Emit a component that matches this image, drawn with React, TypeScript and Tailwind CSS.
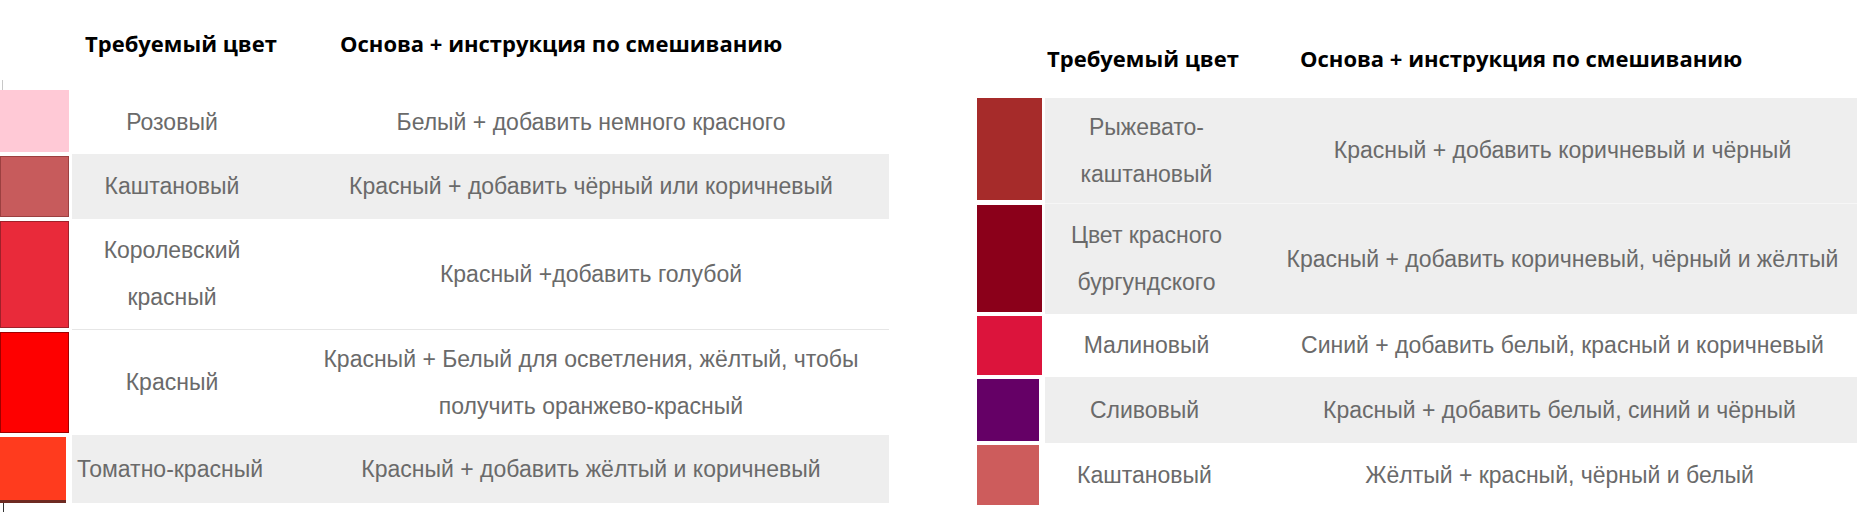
import React from "react";

type Row = {
  h: string;
  sw: string;
  swBox: string;
  bg: string;
  name: string[];
  mix: string[];
  c1: string;
  c2: string;
};

const leftRows: Row[] = [
  { h: "h-[64px]", sw: "bg-[#ffc9d6]", swBox: "pt-0 pb-[2px]", bg: "bg-white", name: ["Розовый"], mix: ["Белый + добавить немного красного"], c1: "pr-[21px]", c2: "" },
  { h: "h-[65px]", sw: "bg-[#c75b5c] border border-[#9c4040]", swBox: "py-[2px]", bg: "bg-[#eeeeee]", name: ["Каштановый"], mix: ["Красный + добавить чёрный или коричневый"], c1: "pr-[21px]", c2: "" },
  { h: "h-[111px]", sw: "bg-[#e92a3a] border border-[#a0202a]", swBox: "py-[2px]", bg: "bg-white border-b border-[#e6e6e6]", name: ["Королевский", "красный"], mix: ["Красный +добавить голубой"], c1: "pr-[21px]", c2: "" },
  { h: "h-[105px]", sw: "bg-[#fe0000] border border-[#a00000]", swBox: "py-[2px]", bg: "bg-white", name: ["Красный"], mix: ["Красный + Белый для осветления, жёлтый, чтобы", "получить оранжево-красный"], c1: "pr-[21px]", c2: "" },
  { h: "h-[68px]", sw: "bg-[#ff3b1e] border-b-[3px] border-[#6e2a22]", swBox: "pt-[2px] pr-[3px]", bg: "bg-[#eeeeee]", name: ["Томатно-красный"], mix: ["Красный + добавить жёлтый и коричневый"], c1: "pr-[25px]", c2: "" },
];

const rightRows: Row[] = [
  { h: "h-[105px]", sw: "bg-[#a62b2a]", swBox: "pt-0 pb-[3px]", bg: "bg-[#eeeeee]", name: ["Рыжевато-", "каштановый"], mix: ["Красный + добавить коричневый и чёрный"], c1: "", c2: "pl-[20px]" },
  { h: "h-[111px]", sw: "bg-[#8b001a]", swBox: "py-[2px]", bg: "bg-[#eeeeee] border-t border-[#f6f6f6]", name: ["Цвет красного", "бургундского"], mix: ["Красный + добавить коричневый, чёрный и жёлтый"], c1: "", c2: "pl-[20px]" },
  { h: "h-[63px]", sw: "bg-[#dc143c]", swBox: "py-[2px]", bg: "bg-white", name: ["Малиновый"], mix: ["Синий + добавить белый, красный и коричневый"], c1: "", c2: "pl-[20px]" },
  { h: "h-[66px]", sw: "bg-[#650066]", swBox: "py-[2px] pr-[3px]", bg: "bg-[#eeeeee]", name: ["Сливовый"], mix: ["Красный + добавить белый, синий и чёрный"], c1: "pr-[4px]", c2: "pl-[14px]" },
  { h: "h-[64px]", sw: "bg-[#cd5c5c]", swBox: "py-[2px] pr-[3px]", bg: "bg-white", name: ["Каштановый"], mix: ["Жёлтый + красный, чёрный и белый"], c1: "pr-[4px]", c2: "pl-[14px]" },
];

const bodyFont = "font-['Liberation_Sans',Arial,sans-serif] text-[23px] text-[#6a6a6a]";
const headFont = "font-['Open_Sans',Arial,sans-serif] font-bold text-[22px] text-black leading-[30px] whitespace-nowrap";

function Lines({ lines }: { lines: string[] }) {
  return (
    <>
      {lines.map((l, i) => (
        <div key={i} className="leading-[47px] whitespace-nowrap">
          {l}
        </div>
      ))}
    </>
  );
}

function TableRow({ r, swW, c1W }: { r: Row; swW: string; c1W: string }) {
  return (
    <div className={`flex ${r.h}`}>
      <div className={`flex ${swW} ${r.swBox}`}>
        <div className={`flex-1 ${r.sw}`} />
      </div>
      <div className={`flex flex-1 items-center ml-[3px] ${r.bg} ${bodyFont}`}>
        <div className={`${c1W} text-center ${r.c1}`}>
          <Lines lines={r.name} />
        </div>
        <div className={`flex-1 text-center ${r.c2}`}>
          <Lines lines={r.mix} />
        </div>
      </div>
    </div>
  );
}

export default function App() {
  return (
    <div className="w-[1857px] h-[512px] bg-white flex overflow-hidden">
      <div className="w-[889px] flex flex-col">
        <div className="h-[80px] flex items-start pt-[28px]">
          <div className={`w-[340px] pl-[85px] ${headFont}`}>Требуемый цвет</div>
          <div className={headFont}>Основа + инструкция по смешиванию</div>
        </div>
        <div className="h-[10px] ml-[2px] border-l border-[#c8c8c8]" />
        {leftRows.map((r, i) => (
          <TableRow key={i} r={r} swW="w-[69px]" c1W="w-[221px]" />
        ))}
        <div className="flex-1 ml-[3px] border-l border-[#333333]" />
      </div>
      <div className="ml-[88px] flex-1 flex flex-col">
        <div className="h-[98px] flex items-start pt-[43px]">
          <div className={`w-[323px] pl-[70px] ${headFont}`}>Требуемый цвет</div>
          <div className={headFont}>Основа + инструкция по смешиванию</div>
        </div>
        {rightRows.map((r, i) => (
          <TableRow key={i} r={r} swW="w-[65px]" c1W="w-[203px]" />
        ))}
      </div>
    </div>
  );
}
